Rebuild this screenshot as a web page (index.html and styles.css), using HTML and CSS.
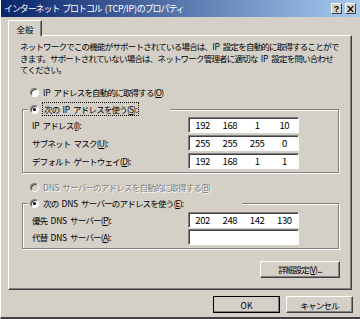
FILE: index.html
```html
<!DOCTYPE html>
<html lang="ja">
<head>
	<meta charset="UTF-8">
	<title>インターネット プロトコル (TCP/IP)のプロパティ</title>
	<link rel="stylesheet" href="styles.css">
</head>
<body>
<div class="window">
    <div class="titlebar">
        <span class="title">インターネット プロトコル <span class="en">(TCP/IP)</span>のプロパティ</span>
        <span class="tbtn help">?</span>
        <span class="tbtn close">
            <svg width="7" height="6" viewBox="0 0 7 6"><path d="M0 0h1.5l2 2 2-2H7L4.3 3 7 6H5.5l-2-2-2 2H0l2.7-3z" fill="#000"/></svg>
        </span>
    </div>
    <div class="content">
        <div class="tabs"><span class="tab on">全般</span></div>
        <div class="page">
            <p class="desc">ネットワークでこの機能がサポートされている場合は、<span class="en">IP</span> 設定を自動的に取得することがで<br>きます。サポートされていない場合は、ネットワーク管理者に適切な <span class="en">IP</span> 設定を問い合わせ<br>てください。</p>

            <div class="radio first"><i></i><span><span class="en">IP</span> アドレスを自動的に取得する(<u>O</u>)</span></div>

            <fieldset class="group ipgroup">
                <legend class="radio on"><i></i><span class="focus">次の <span class="en">IP</span> アドレスを使う(<u>S</u>):</span></legend>
                <div class="rows">
                    <div class="row">
                        <span><span class="en">IP</span> アドレス(<u>I</u>):</span>
                        <span class="ip"><b>192</b><b>168</b><b>1</b><b>10</b></span>
                    </div>
                    <div class="row">
                        <span>サブネット マスク(<u>U</u>):</span>
                        <span class="ip"><b>255</b><b>255</b><b>255</b><b>0</b></span>
                    </div>
                    <div class="row">
                        <span>デフォルト ゲートウェイ(<u>D</u>):</span>
                        <span class="ip"><b>192</b><b>168</b><b>1</b><b>1</b></span>
                    </div>
                </div>
            </fieldset>

            <div class="radio off"><i></i><span><span class="en">DNS</span> サーバーのアドレスを自動的に取得する(<u>B</u>)</span></div>

            <fieldset class="group dnsgroup">
                <legend class="radio on"><i></i><span>次の <span class="en">DNS</span> サーバーのアドレスを使う(<u>E</u>):</span></legend>
                <div class="rows">
                    <div class="row">
                        <span>優先 <span class="en">DNS</span> サーバー(<u>P</u>):</span>
                        <span class="ip"><b>202</b><b>248</b><b>142</b><b>130</b></span>
                    </div>
                    <div class="row">
                        <span>代替 <span class="en">DNS</span> サーバー(<u>A</u>):</span>
                        <span class="ip"></span>
                    </div>
                </div>
            </fieldset>

            <div class="adv"><span class="btn wide">詳細設定(<u>V</u>)...</span></div>
        </div>
        <div class="footer">
            <span class="btn default">OK</span>
            <span class="btn">キャンセル</span>
        </div>
    </div>
</div>
</body>
</html>
```

FILE: styles.css
```css
*
{
    margin: 0;
    padding: 0;
    box-sizing: border-box;
}
body
{
    width: 360px;
    height: 319px;
    overflow: hidden;
    font-family: "Noto Sans CJK JP", "Noto Sans", sans-serif;
    font-size: 8.5px;
    letter-spacing: -0.8px;
    word-spacing: 2px;
    color: #000;
}
.en
{
    letter-spacing: -0.2px;
}
.window
{
    width: 360px;
    height: 319px;
    background: #d4d0c8;
    border-left: 1px solid #fff;
    border-bottom: 2px solid #404040;
}
.titlebar
{
    display: flex;
    align-items: center;
    height: 17px;
    padding: 0 4px 0 3px;
    background: linear-gradient(to right, #0a246a, #a6caf0);
}
.title
{
    flex: 1;
    color: #fff;
    font-size: 9px;
    letter-spacing: -1.1px;
    white-space: nowrap;
}
.tbtn
{
    display: flex;
    align-items: center;
    justify-content: center;
    width: 11px;
    height: 11px;
    margin-left: 2px;
    background: #d4d0c8;
    border: 1px solid;
    border-color: #fff #404040 #404040 #fff;
    font: bold 9px "Liberation Sans", sans-serif;
    letter-spacing: 0;
}
.close
{
    margin-left: 3px;
}
.content
{
    padding: 3px 8px 0 7px;
}
.tabs
{
    display: flex;
    height: 15px;
}
.tab
{
    position: relative;
    z-index: 1;
    display: flex;
    align-items: center;
    justify-content: center;
    width: 34px;
    height: 16px;
    background: #d4d0c8;
    border: 1px solid;
    border-color: #fff #404040 transparent #fff;
    border-bottom: none;
    box-shadow: inset -1px 0 #808080;
    letter-spacing: 0;
}
.page
{
    height: 255px;
    padding: 5px 11px 0 11px;
    border: 1px solid;
    border-color: #fff #404040 #404040 #fff;
    box-shadow: inset -1px -1px #808080;
}
.desc
{
    line-height: 11.5px;
    white-space: nowrap;
}
.radio
{
    display: flex;
    align-items: center;
    height: 13px;
    white-space: nowrap;
}
.radio i
{
    position: relative;
    width: 9px;
    height: 9px;
    margin-right: 4px;
    border-radius: 50%;
    background: #fff;
    border: 1px solid;
    border-color: #808080 #fff #fff #808080;
    box-shadow: inset 1px 1px #404040;
    flex: none;
}
.radio.on i::after
{
    content: "";
    position: absolute;
    left: 2px;
    top: 2px;
    width: 3px;
    height: 3px;
    border-radius: 50%;
    background: #000;
}
.first
{
    margin: 10px 0 0 10px;
}
.off
{
    margin: 8px 0 0 10px;
    color: #808080;
    text-shadow: 1px 1px #fff;
}
.off i
{
    background: #d4d0c8;
}
.focus
{
    padding: 0 1px;
    outline: 1px dotted #000;
    outline-offset: 0;
}
.group
{
    margin: 4px 1px 0 2px;
    border: 1px solid #808080;
    box-shadow: inset 1px 1px #fff, 1px 1px #fff;
    min-inline-size: 0;
}
.group legend
{
    margin-left: 5px;
    padding: 0 2px;
    background: #d4d0c8;
}
.ipgroup legend
{
    width: 142px;
}
.dnsgroup
{
    margin-top: 3px;
}
.dnsgroup legend
{
    width: 214px;
}
.rows
{
    display: flex;
    flex-direction: column;
    gap: 2px;
    padding: 1px 39px 3px 9px;
}
.dnsgroup .rows
{
    gap: 1px;
    padding-top: 2px;
}
.row
{
    display: flex;
    align-items: center;
    justify-content: space-between;
    height: 16px;
}
.ip
{
    display: flex;
    width: 111px;
    height: 16px;
    background: #fff;
    border: 1px solid;
    border-color: #808080 #fff #fff #808080;
    box-shadow: inset 1px 1px #404040;
    font-size: 9.5px;
    letter-spacing: -0.3px;
}
.ip b
{
    flex: 1;
    font-weight: normal;
    text-align: center;
    line-height: 14px;
}
.adv
{
    display: flex;
    justify-content: flex-end;
    margin-top: 12px;
}
.btn
{
    display: flex;
    align-items: center;
    justify-content: center;
    width: 67px;
    height: 17px;
    background: #d4d0c8;
    border: 1px solid;
    border-color: #fff #404040 #404040 #fff;
    box-shadow: inset -1px -1px #808080;
    white-space: nowrap;
}
.wide
{
    width: 80px;
}
.footer
{
    display: flex;
    justify-content: flex-end;
    gap: 6px;
    margin: 6px -1px 0 0;
}
.default
{
    outline: 1px solid #000;
    outline-offset: -1px;
    letter-spacing: 0;
}
```
